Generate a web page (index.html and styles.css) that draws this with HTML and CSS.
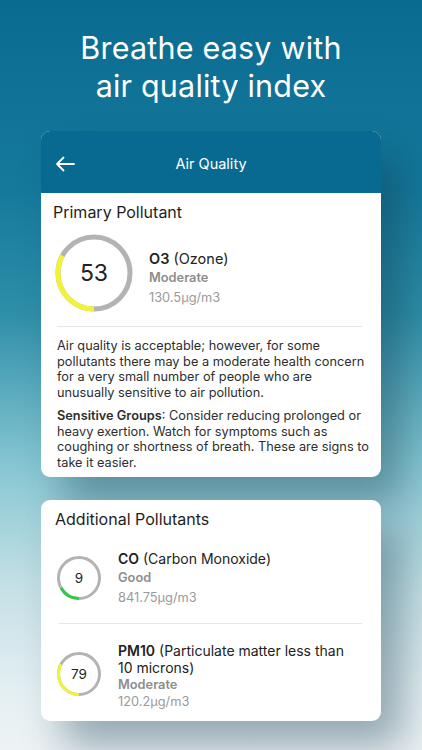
FILE: index.html
```html
<!DOCTYPE html>
<html lang="en">
  <head>
    <meta charset="UTF-8" />
    <meta name="viewport" content="width=device-width, initial-scale=1.0" />
    <title>Air Quality</title>
    <link rel="stylesheet" href="styles.css">
  </head>
  <body>
    <div class="screen">
      <h1 class="headline">Breathe easy with<br />air quality index</h1>

      <section class="card primary-card">
        <div class="app-bar">
          <svg class="back" width="20" height="16" viewBox="0 0 20 16">
            <path d="M19 8H2M8.5 1.5L2 8l6.5 6.5" fill="none" stroke="#fff" stroke-width="1.8" stroke-linecap="round" stroke-linejoin="round" />
          </svg>
          <span class="app-title">Air Quality</span>
        </div>

        <div class="card-body">
          <h2 class="section-title">Primary Pollutant</h2>
          <div class="pollutant big">
            <div class="ring">
              <svg width="78" height="78" viewBox="0 0 78 78">
                <circle cx="39" cy="39" r="36" fill="none" stroke="#b3b3b3" stroke-width="5" />
                <circle cx="39" cy="39" r="36" fill="none" stroke="#f2f23a" stroke-width="5"
                  stroke-dasharray="74.6 300" transform="rotate(90 39 39)" />
              </svg>
              <span class="ring-value">53</span>
            </div>
            <div class="info">
              <p class="name"><b>O3</b> (Ozone)</p>
              <p class="level">Moderate</p>
              <p class="amount">130.5µg/m3</p>
            </div>
          </div>
          <hr class="divider" />
          <p class="desc">Air quality is acceptable; however, for some pollutants there may be a moderate health concern for a very small number of people who are unusually sensitive to air pollution.</p>
          <p class="desc"><b>Sensitive Groups</b>: Consider reducing prolonged or heavy exertion. Watch for symptoms such as coughing or shortness of breath. These are signs to take it easier.</p>
        </div>
      </section>

      <section class="card extra-card">
        <h2 class="section-title">Additional Pollutants</h2>

        <div class="pollutant small">
          <div class="ring">
            <svg width="44" height="44" viewBox="0 0 44 44">
              <circle cx="22" cy="22" r="20.5" fill="none" stroke="#b3b3b3" stroke-width="3" />
              <circle cx="22" cy="22" r="20.5" fill="none" stroke="#2ec94a" stroke-width="3"
                stroke-dasharray="21.5 200" transform="rotate(90 22 22)" />
            </svg>
            <span class="ring-value">9</span>
          </div>
          <div class="info">
            <p class="name"><b>CO</b> (Carbon Monoxide)</p>
            <p class="level">Good</p>
            <p class="amount">841.75µg/m3</p>
          </div>
        </div>

        <hr class="divider" />

        <div class="pollutant small tight">
          <div class="ring">
            <svg width="44" height="44" viewBox="0 0 44 44">
              <circle cx="22" cy="22" r="20.5" fill="none" stroke="#b3b3b3" stroke-width="3" />
              <circle cx="22" cy="22" r="20.5" fill="none" stroke="#f2f23a" stroke-width="3"
                stroke-dasharray="42.2 200" transform="rotate(90 22 22)" />
            </svg>
            <span class="ring-value">79</span>
          </div>
          <div class="info">
            <p class="name"><b>PM10</b> (Particulate matter less than 10 microns)</p>
            <p class="level">Moderate</p>
            <p class="amount">120.2µg/m3</p>
          </div>
        </div>
      </section>
    </div>
  </body>
</html>
```

FILE: styles.css
```css
* {
  margin: 0;
  padding: 0;
  box-sizing: border-box;
}

body {
  font-family: Inter, "Noto Sans", sans-serif;
  width: 422px;
  height: 750px;
  overflow: hidden;
  color: #222;
}

.screen {
  height: 750px;
  padding-top: 29px;
  background: linear-gradient(180deg, #0a6b90 0%, #15799c 25%, #2f8fa9 42%, #86c6d2 62%, #c4e0e6 78%, #e4eff2 92%, #edf3f5 100%);
  display: flex;
  flex-direction: column;
  align-items: center;
}

.headline {
  color: #fff;
  font-size: 30.5px;
  font-weight: 400;
  line-height: 38px;
  text-align: center;
  letter-spacing: 0.2px;
}

.card {
  width: 340px;
  background: #fff;
  border-radius: 9px;
  box-shadow: 22px 26px 40px rgba(10, 50, 70, 0.38);
}

.primary-card {
  margin-top: 26px;
  overflow: hidden;
}

.app-bar {
  height: 62px;
  background: #086a90;
  display: flex;
  align-items: center;
  position: relative;
  padding: 3px 0 0 14px;
}

.back {
  display: block;
}

.app-title {
  position: absolute;
  left: 0;
  right: 0;
  text-align: center;
  color: #fff;
  font-size: 14.5px;
  pointer-events: none;
}

.card-body {
  padding: 9px 19px 6px 12px;
}

.section-title {
  font-size: 16px;
  font-weight: 400;
  line-height: 20px;
  color: #1e1e1e;
}

.pollutant {
  display: flex;
  align-items: center;
}

.pollutant.big {
  margin-top: 12px;
  margin-left: 2px;
  gap: 16px;
}

.ring {
  position: relative;
  flex-shrink: 0;
}

.ring svg {
  display: block;
}

.ring-value {
  position: absolute;
  inset: 0;
  display: flex;
  align-items: center;
  justify-content: center;
}

.big .ring-value {
  font-size: 23px;
}

.small .ring-value {
  font-size: 13.5px;
}

.info p {
  line-height: 19.5px;
}

.big .info {
  padding-top: 10px;
}

.name {
  font-size: 14.5px;
  color: #222;
}

.small .name {
  font-size: 14px;
}

.name b {
  font-weight: 600;
}

.level {
  font-size: 12.8px;
  font-weight: 600;
  color: #8d8d8d;
}

.amount {
  font-size: 12.8px;
  color: #9a9a9a;
}

.divider {
  border: none;
  border-top: 1.5px solid #e6e6e6;
  margin: 14px 0 11px 4px;
}

.desc {
  font-size: 12.75px;
  line-height: 15.7px;
  color: #2e2e2e;
  margin: 0 -8px 0 4px;
}

.desc + .desc {
  margin-top: 7px;
}

.desc b {
  font-weight: 600;
}

.extra-card {
  margin-top: 23px;
  padding: 9px 19px 11px 14px;
}

.pollutant.small {
  margin-top: 20px;
  margin-left: 2px;
  gap: 17px;
}

.pollutant.small.tight {
  margin-top: 18px;
}

.tight .ring {
  margin-top: -4px;
}

.small .info p {
  line-height: 19.5px;
}

.tight .info p {
  line-height: 17px;
}

.extra-card .divider {
  margin: 16px 0 0 4px;
}
```
